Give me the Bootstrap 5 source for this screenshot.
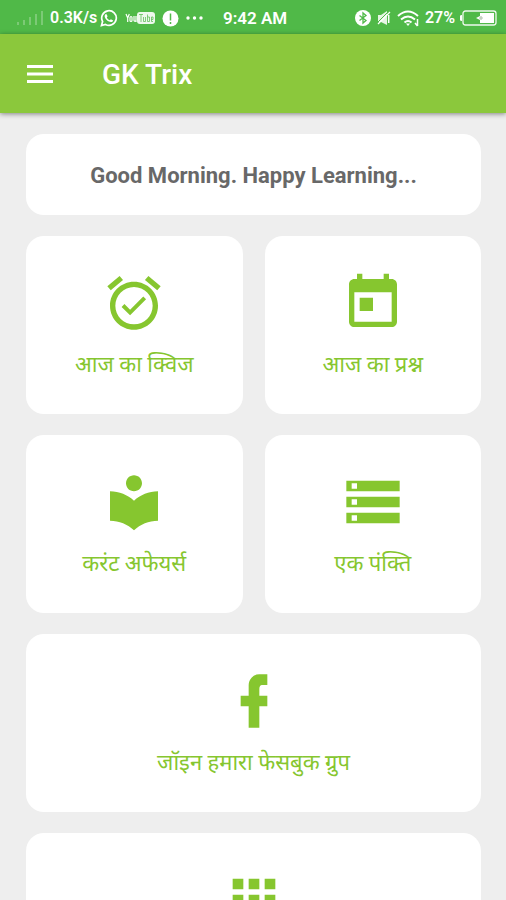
<!DOCTYPE html>
<html lang="hi">
<head>
<meta charset="utf-8">
<meta name="viewport" content="width=device-width, initial-scale=1">
<title>GK Trix</title>
<link href="https://cdn.jsdelivr.net/npm/bootstrap@5.3.0/dist/css/bootstrap.min.css" rel="stylesheet">
<style>
  body { background: #eee; font-family: Roboto, "Noto Sans Devanagari", "Noto Sans", sans-serif; }
  .status-bar { background: #50b948; height: 34px; padding: 2px 9px 0 16px; font-size: 16px; font-weight: 600; line-height: 20px; }
  .status-left { gap: 3px; }
  .status-right { gap: 5px; }
  .status-bar svg { flex: none; }
  .status-clock { font-size: 17px; }
  .app-bar { background: #8bc83c; height: 79px; padding: 2px 26px 0; gap: 48px; box-shadow: 0 1px 5px rgba(0,0,0,.45); z-index: 1; }
  .app-title { font-size: 28px; line-height: 32px; font-weight: 500; }
  .tiles { padding: 21px 25px 21px 26px; scrollbar-width: none; }
  .tile-grid { display: grid; grid-template-columns: 1fr 1fr; gap: 21px 22px; }
  .wide { grid-column: 1 / -1; }
  .panel { background: #fff; border-radius: 18px; }
  .greeting { color: #686868; font-size: 22px; line-height: 33px; font-weight: 700; padding: 25px 16px 23px; }
  .tile { color: #86c62f; min-height: 178px; padding: 35px 12px 28px; font-size: 22px; line-height: 32px; gap: 14px; }
  .tile:hover { color: #6fae1c; }
</style>
</head>
<body>
<div class="vh-100 d-flex flex-column">
  <div class="status-bar d-flex align-items-center justify-content-between text-white flex-shrink-0">
    <div class="status-left d-flex align-items-center">
      <svg width="27" height="16" viewBox="0 0 27 16" fill="#fff" opacity=".25" aria-hidden="true"><path d="M1 12h2v3H1zM7 10h2v5H7zM13 7h2v8h-2zM19 4h2v11h-2zM25 1h2v14h-2z"/></svg>
      <span class="ms-1">0.3K/s</span>
      <svg width="18" height="18" viewBox="0 0 18 18" fill="none" stroke="#fff" stroke-width="1.7" aria-hidden="true"><path d="M1.5 16.5l1.1-4A7.3 7.3 0 1 1 5.500 15.400z"/><path d="M6.200 4.800l1.400 2.400-.8 1.200c.7 1.400 1.600 2.200 2.900 2.800l1.200-1 2.300 1.200c-.6 2-2.600 2-4.300 1.200-2-.9-3.700-2.700-4.200-4.800-.2-1.400.4-2.500 1.500-3z" fill="#fff" stroke="none"/></svg>
      <svg class="ms-1" width="30" height="14" viewBox="0 0 30 14" aria-label="YouTube" role="img"><rect x="12" y="1" width="18" height="12" rx="3" fill="#fff" opacity=".9"/><g fill="none" stroke="#fff" stroke-width="1.200"><path d="M1 3l1.700 4L4.300 3M2.700 7v4"/><rect x="5" y="5.500" width="2" height="5" rx="1"/><path d="M9 5v4.500q0 1 1.600.5M11 5v6"/></g><g fill="none" stroke="#50b948" opacity=".7"><path d="M14 3.500h4M16 3.500V11M18.500 6v4.500h2V6M22.500 3.500v7h2V6h-2M28 10.500h-1.500V6H28v2.500h-1.500"/></g></svg>
      <svg class="ms-1" width="17" height="17" viewBox="0 0 17 17" aria-hidden="true"><circle cx="8.500" cy="8.500" r="8" fill="#fff"/><path d="M8.500 3.500v7M8.500 12v2" stroke="#50b948" stroke-width="1.500"/></svg>
      <svg class="ms-1" width="17" height="4" viewBox="0 0 17 4" fill="#fff" aria-hidden="true"><circle cx="2" cy="2" r="1.700"/><circle cx="8.500" cy="2" r="1.700"/><circle cx="15" cy="2" r="1.700"/></svg>
    </div>
    <span class="status-clock">9:42 AM</span>
    <div class="status-right d-flex align-items-center ms-5">
      <svg width="16" height="16" viewBox="0 0 16 16" aria-hidden="true"><circle cx="8" cy="8" r="8" fill="#fff"/><path d="M4.500 5.500l6.500 5-3 2.500V3l3 2.500-6.500 5" fill="none" stroke="#50b948" stroke-width="1.300"/></svg>
      <svg width="16" height="16" viewBox="0 0 16 16" aria-hidden="true"><path d="M2 5h3l6-4v14l-6-3H2z" fill="#fff" opacity=".85"/><path d="M12.700 5v8" stroke="#fff" stroke-width="1.500"/><path d="M1 13L13 1" stroke="#50b948" stroke-width="1"/><path d="M2 14L14 2" stroke="#fff" stroke-width="1.200"/></svg>
      <svg width="23" height="17" viewBox="0 0 23 17" fill="none" stroke="#fff" stroke-width="2" aria-hidden="true"><path d="M1 6Q11 -3 21 6M4 9.500q7-6 14 0M7.500 12.500q3.500-3 7 0"/><path d="M9 13.500h4L11 16z" fill="#fff" stroke="none"/><path d="M20.500 9v7M18 13l2.500 3" stroke-width="1.500"/></svg>
      <span>27%</span>
      <svg width="37" height="16" viewBox="0 0 37 16" aria-hidden="true"><rect x="3" y="1" width="33" height="14" rx="2.500" fill="none" stroke="#fff" stroke-width="1.300" opacity=".9"/><path d="M0 6q0-1 2-1v6q-2 0-2-1zM20 3h14v10H20v-3l-4-2 4-2z" fill="#fff"/><path d="M19 8h4M21 6v4" stroke="#b5c4b2" stroke-width="1.200"/></svg>
    </div>
  </div>

  <header class="app-bar d-flex align-items-center text-white position-relative flex-shrink-0">
    <button type="button" class="btn p-0 border-0 text-white d-flex" aria-label="Menu">
      <svg width="28" height="20" viewBox="0 0 28 20" fill="currentColor" aria-hidden="true"><path d="M1 0h26v3H1zM1 7.500h26v3H1zM1 15h26v3H1z"/></svg>
    </button>
    <h1 class="app-title m-0">GK Trix</h1>
  </header>

  <main class="tiles flex-grow-1 overflow-auto">
    <div class="tile-grid">
      <p class="panel greeting wide m-0 text-center">Good Morning. Happy Learning...</p>

      <a href="#quiz" class="panel tile d-flex flex-column align-items-center text-decoration-none text-center">
        <svg width="64" height="64" viewBox="0 0 24 24" fill="currentColor" aria-hidden="true"><path d="M22 5.720l-4.600-3.860-1.290 1.530 4.600 3.860L22 5.720zM7.880 3.390L6.600 1.860 2 5.710l1.290 1.530 4.590-3.850zM12 4c-4.970 0-9 4.030-9 9s4.020 9 9 9 9-4.030 9-9-4.030-9-9-9zm0 16c-3.870 0-7-3.130-7-7s3.130-7 7-7 7 3.130 7 7-3.130 7-7 7zm-1.460-5.470L8.410 12.400l-1.060 1.060 3.180 3.180 6-6-1.060-1.060-4.930 4.950z"/></svg>
        <span>आज का क्विज</span>
      </a>

      <a href="#question" class="panel tile d-flex flex-column align-items-center text-decoration-none text-center">
        <svg width="64" height="64" viewBox="0 0 24 24" fill="currentColor" aria-hidden="true"><path d="M19 3h-1V1h-2v2H8V1H6v2H5c-1.110 0-1.990.9-1.990 2L3 19c0 1.100.89 2 2 2h14c1.100 0 2-.9 2-2V5c0-1.100-.9-2-2-2zm0 16H5V8h14v11zM7 10h5v5H7z"/></svg>
        <span>आज का प्रश्न</span>
      </a>

      <a href="#current-affairs" class="panel tile d-flex flex-column align-items-center text-decoration-none text-center">
        <svg width="64" height="64" viewBox="0 0 24 24" fill="currentColor" aria-hidden="true"><path d="M12 11.550C9.640 9.350 6.480 8 3 8v11c3.480 0 6.640 1.350 9 3.550 2.360-2.190 5.520-3.550 9-3.550V8c-3.480 0-6.640 1.350-9 3.550zM12 8c1.660 0 3-1.340 3-3s-1.340-3-3-3-3 1.340-3 3 1.340 3 3 3z"/></svg>
        <span>करंट अफेयर्स</span>
      </a>

      <a href="#one-liner" class="panel tile d-flex flex-column align-items-center text-decoration-none text-center">
        <svg width="64" height="64" viewBox="0 0 24 24" fill="currentColor" aria-hidden="true"><path d="M2 20h20v-4H2v4zm2-3h2v2H4v-2zM2 4v4h20V4H2zm4 3H4V5h2v2zm-4 7h20v-4H2v4zm2-3h2v2H4v-2z"/></svg>
        <span>एक पंक्ति</span>
      </a>

      <a href="#facebook" class="panel tile wide d-flex flex-column align-items-center text-decoration-none text-center">
        <svg width="64" height="64" viewBox="0 0 24 24" fill="currentColor" aria-hidden="true"><path d="M17 2v4h-2c-.69 0-1 .81-1 1.500V10h3v4h-3v8h-4v-8H7v-4h3V6a4 4 0 0 1 4-4h3z"/></svg>
        <span>जॉइन हमारा फेसबुक ग्रुप</span>
      </a>

      <a href="#apps" aria-label="Apps" class="panel tile wide d-flex flex-column align-items-center text-decoration-none text-center">
        <svg width="64" height="64" viewBox="0 0 24 24" fill="currentColor" aria-hidden="true"><path d="M4 8h4V4H4v4zm6 12h4v-4h-4v4zm-6 0h4v-4H4v4zm0-6h4v-4H4v4zm6 0h4v-4h-4v4zm6-10v4h4V4h-4zm-6 4h4V4h-4v4zm6 6h4v-4h-4v4zm0 6h4v-4h-4v4z"/></svg>
      </a>
    </div>
  </main>
</div>
<script src="https://cdn.jsdelivr.net/npm/bootstrap@5.3.0/dist/js/bootstrap.bundle.min.js"></script>
</body>
</html>
